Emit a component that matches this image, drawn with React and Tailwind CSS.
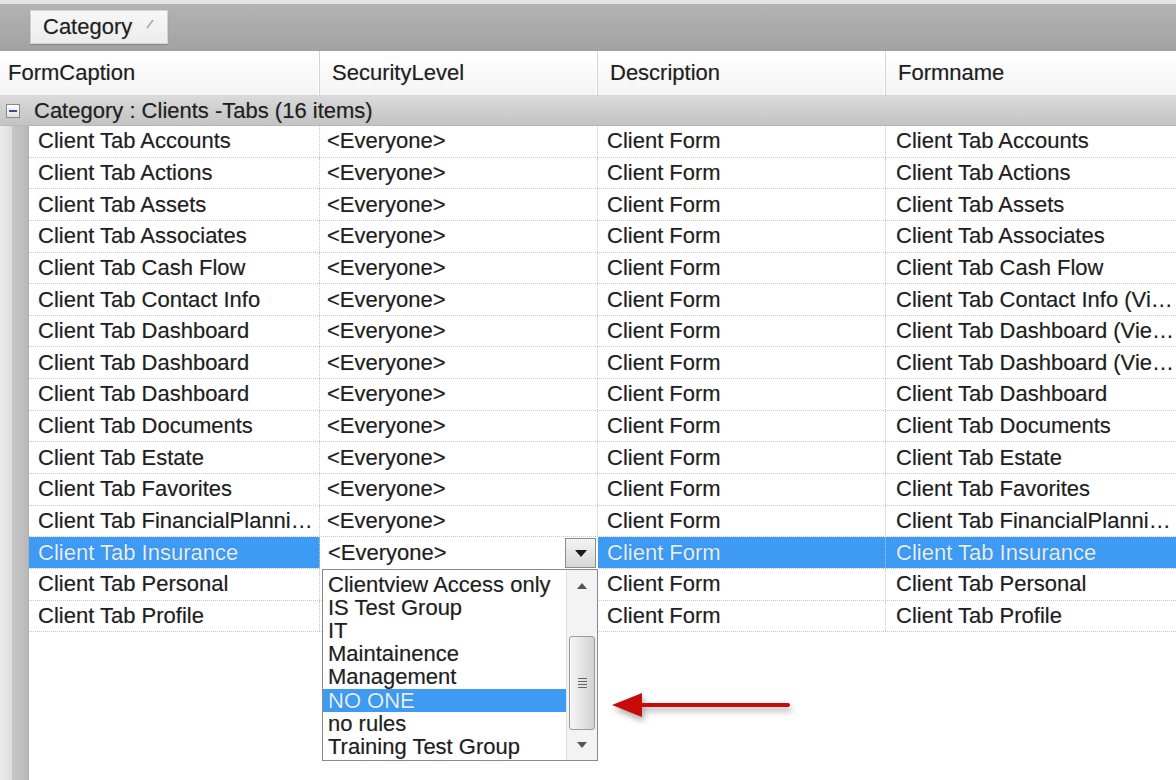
import React from 'react';

const rows = [
  ['Client Tab Accounts', 'Client Tab Accounts'],
  ['Client Tab Actions', 'Client Tab Actions'],
  ['Client Tab Assets', 'Client Tab Assets'],
  ['Client Tab Associates', 'Client Tab Associates'],
  ['Client Tab Cash Flow', 'Client Tab Cash Flow'],
  ['Client Tab Contact Info', 'Client Tab Contact Info (Vi…'],
  ['Client Tab Dashboard', 'Client Tab Dashboard (Vie…'],
  ['Client Tab Dashboard', 'Client Tab Dashboard (Vie…'],
  ['Client Tab Dashboard', 'Client Tab Dashboard'],
  ['Client Tab Documents', 'Client Tab Documents'],
  ['Client Tab Estate', 'Client Tab Estate'],
  ['Client Tab Favorites', 'Client Tab Favorites'],
  ['Client Tab FinancialPlanni…', 'Client Tab FinancialPlanni…'],
  ['Client Tab Insurance', 'Client Tab Insurance', true],
  ['Client Tab Personal', 'Client Tab Personal'],
  ['Client Tab Profile', 'Client Tab Profile'],
];

const options = [
  'Clientview Access only',
  'IS Test Group',
  'IT',
  'Maintainence',
  'Management',
  'NO ONE',
  'no rules',
  'Training Test Group',
];

const cell = 'h-full flex items-center whitespace-nowrap overflow-hidden border-r border-dotted border-[#c9c9c9]';

function Row({ caption, formname, selected, index }) {
  const sel = selected ? 'bg-[#3d9bf3] text-[#e4eefb]' : '';
  return (
    <div className="flex h-[31.65px] border-b border-dotted border-[#c9c9c9]">
      <div className={`${cell} w-[291px] pl-[9px] ${sel}`}>{caption}</div>
      <div className={`${cell} w-[278px] pl-[7px]`}>{index < 14 ? '<Everyone>' : ''}</div>
      <div className={`${cell} w-[288px] pl-[9px] ${sel}`}>Client Form</div>
      <div className={`h-full flex items-center whitespace-nowrap overflow-hidden flex-1 pl-[10px] ${sel}`}>{formname}</div>
    </div>
  );
}

function HeaderCell({ children, className }) {
  return (
    <div className={`h-full flex items-center border-r border-[#d4d4d4] shadow-[inset_-1px_0_0_#ffffff] ${className}`}>
      {children}
    </div>
  );
}

export default function App() {
  return (
    <div
      className="relative w-[1176px] h-[780px] overflow-hidden bg-white text-[22px] text-[#1f1f1f] leading-none [text-shadow:0_0_1px_rgba(0,0,0,0.3)]"
      style={{ fontFamily: '"Liberation Sans", Arial, sans-serif' }}>
      {/* group-by panel */}
      <div className="h-[51px] border-t-[4px] border-[#e4e4e4] bg-gradient-to-b from-[#b3b3b3] to-[#a2a2a2] pt-[6px] pl-[30px]">
        <div className="w-[138px] h-[34px] flex items-center gap-[14px] pl-[12px] bg-gradient-to-b from-[#f7f7f7] to-[#ececec] border border-[#d2d2d2] shadow-[0_1px_1px_rgba(0,0,0,0.15)]">
          <span>Category</span>
          <svg width="8" height="10" viewBox="0 0 8 10" className="mb-[6px]">
            <line x1="1" y1="9" x2="7" y2="1" stroke="#a8a8a8" strokeWidth="1.5" />
          </svg>
        </div>
      </div>

      {/* column headers */}
      <div className="flex h-[45px] bg-gradient-to-b from-[#ffffff] to-[#f4f4f4] border-b border-[#d6d6d6]">
        <HeaderCell className="w-[320px] pl-[8px]">FormCaption</HeaderCell>
        <HeaderCell className="w-[278px] pl-[12px]">SecurityLevel</HeaderCell>
        <HeaderCell className="w-[288px] pl-[12px]">Description</HeaderCell>
        <div className="h-full flex items-center flex-1 pl-[12px]">Formname</div>
      </div>

      {/* group row */}
      <div className="flex items-center h-[30px] bg-gradient-to-b from-[#dadada] to-[#c3c3c3] border-b border-[#b8b8b8] pl-[6px] gap-[14px]">
        <div className="w-[14px] h-[14px] border border-[#8a8a8a] bg-gradient-to-b from-white to-[#e2e2e2] flex items-center justify-center">
          <div className="w-[8px] h-[2px] bg-[#3a4f8a]" />
        </div>
        <span>Category : Clients -Tabs (16 items)</span>
      </div>

      {/* data area */}
      <div className="flex h-[654px]">
        <div className="w-[29px] h-full flex border-r border-[#b0b0b0]">
          <div className="w-[12px] h-full bg-gradient-to-r from-[#ececec] to-[#dedede]" />
          <div className="flex-1 h-full bg-gradient-to-r from-[#c6c6c6] to-[#b9b9b9]" />
        </div>
        <div className="flex-1 flex flex-col">
          {rows.map(([caption, formname, selected], i) => (
            <Row key={i} index={i} caption={caption} formname={formname} selected={selected} />
          ))}
        </div>
      </div>

      {/* combobox editor */}
      <div className="absolute left-[321px] top-[537px] w-[277px] h-[32px] bg-white flex items-center">
        <span className="pl-[7px] flex-1">&lt;Everyone&gt;</span>
        <div className="w-[31px] h-[30px] mr-[2px] border border-[#8c8c8c] bg-gradient-to-b from-[#f4f4f4] to-[#d6d6d6] flex items-center justify-center">
          <svg width="12" height="7" viewBox="0 0 12 7">
            <polygon points="0,0 12,0 6,7" fill="#1a1a1a" />
          </svg>
        </div>
      </div>

      {/* dropdown list */}
      <div className="absolute left-[322px] top-[569px] w-[276px] h-[192px] bg-white border border-[#8a8a8a] flex">
        <div className="flex-1 flex flex-col pt-[3px]">
          {options.map((o) => (
            <div
              key={o}
              className={`h-[23.2px] flex items-center pl-[5px] whitespace-nowrap ${o === 'NO ONE' ? 'bg-[#3d9bf3] text-[#e4eefb]' : ''}`}>
              {o}
            </div>
          ))}
        </div>
        <div className="w-[31px] h-full flex flex-col bg-[#f3f3f3] border-l border-[#e0e0e0]">
          <div className="h-[32px] flex items-center justify-center">
            <svg width="10" height="6" viewBox="0 0 10 6">
              <polygon points="0,6 10,6 5,0" fill="#555" />
            </svg>
          </div>
          <div className="h-[34px]" />
          <div className="mx-[2px] h-[94px] rounded-[3px] border border-[#9a9a9a] bg-gradient-to-r from-[#f6f6f6] via-[#e4e4e4] to-[#d2d2d2] flex flex-col items-center justify-center gap-[2px]">
            <div className="w-[9px] h-[1px] bg-[#666]" />
            <div className="w-[9px] h-[1px] bg-[#666]" />
            <div className="w-[9px] h-[1px] bg-[#666]" />
            <div className="w-[9px] h-[1px] bg-[#666]" />
          </div>
          <div className="flex-1 flex items-center justify-center">
            <svg width="10" height="6" viewBox="0 0 10 6">
              <polygon points="0,0 10,0 5,6" fill="#555" />
            </svg>
          </div>
        </div>
      </div>

      {/* annotation arrow */}
      <svg
        className="absolute left-[608px] top-[688px]"
        width="190"
        height="40"
        viewBox="0 0 190 40"
        style={{ filter: 'drop-shadow(2px 4px 3px rgba(0,0,0,0.35))' }}>
        <line x1="32" y1="17" x2="180" y2="17" stroke="#c80a0a" strokeWidth="4" strokeLinecap="round" />
        <polygon points="4,17 34,5 34,29" fill="#c80a0a" />
      </svg>
    </div>
  );
}
